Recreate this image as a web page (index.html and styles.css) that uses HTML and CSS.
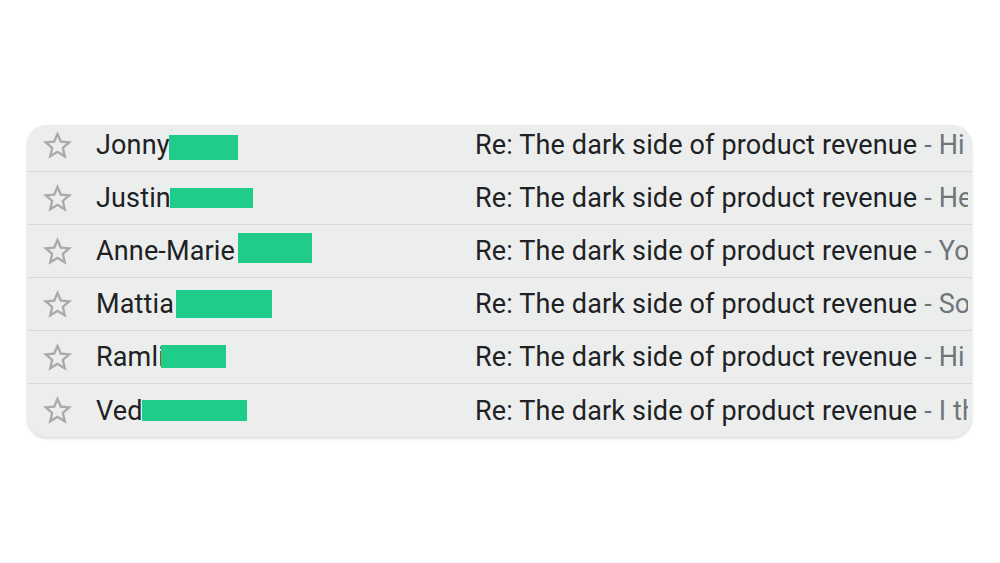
FILE: index.html
```html
<!DOCTYPE html>
<html lang="en">
<head>
<meta charset="utf-8">
<title>Inbox</title>
<link rel="stylesheet" href="styles.css">
</head>
<body>
<div class="stage">
  <div class="card">
    <div class="row first">
      <span class="star"><svg viewBox="0 0 24 24"><path d="M22 9.24l-7.19-.62L12 2 9.19 8.63 2 9.24l5.46 4.73L5.82 21 12 17.27 18.18 21l-1.63-7.03L22 9.24zM12 15.4l-3.76 2.27 1-4.28-3.32-2.88 4.38-.38L12 6.1l1.71 4.04 4.38.38-3.32 2.88 1 4.28L12 15.4z"/></svg></span>
      <span class="name">Jonny</span>
      <span class="subject">Re: The dark side of product revenue <span class="preview">- Hi there</span></span>
      <span class="redact r1"></span>
    </div>
    <div class="row">
      <span class="star"><svg viewBox="0 0 24 24"><path d="M22 9.24l-7.19-.62L12 2 9.19 8.63 2 9.24l5.46 4.73L5.82 21 12 17.27 18.18 21l-1.63-7.03L22 9.24zM12 15.4l-3.76 2.27 1-4.28-3.32-2.88 4.38-.38L12 6.1l1.71 4.04 4.38.38-3.32 2.88 1 4.28L12 15.4z"/></svg></span>
      <span class="name">Justin</span>
      <span class="subject">Re: The dark side of product revenue <span class="preview">- Hey</span></span>
      <span class="redact r2"></span>
    </div>
    <div class="row">
      <span class="star"><svg viewBox="0 0 24 24"><path d="M22 9.24l-7.19-.62L12 2 9.19 8.63 2 9.24l5.46 4.73L5.82 21 12 17.27 18.18 21l-1.63-7.03L22 9.24zM12 15.4l-3.76 2.27 1-4.28-3.32-2.88 4.38-.38L12 6.1l1.71 4.04 4.38.38-3.32 2.88 1 4.28L12 15.4z"/></svg></span>
      <span class="name">Anne-Marie</span>
      <span class="subject">Re: The dark side of product revenue <span class="preview">- You</span></span>
      <span class="redact r3"></span>
    </div>
    <div class="row">
      <span class="star"><svg viewBox="0 0 24 24"><path d="M22 9.24l-7.19-.62L12 2 9.19 8.63 2 9.24l5.46 4.73L5.82 21 12 17.27 18.18 21l-1.63-7.03L22 9.24zM12 15.4l-3.76 2.27 1-4.28-3.32-2.88 4.38-.38L12 6.1l1.71 4.04 4.38.38-3.32 2.88 1 4.28L12 15.4z"/></svg></span>
      <span class="name">Mattia</span>
      <span class="subject">Re: The dark side of product revenue <span class="preview">- So</span></span>
      <span class="redact r4"></span>
    </div>
    <div class="row">
      <span class="star"><svg viewBox="0 0 24 24"><path d="M22 9.24l-7.19-.62L12 2 9.19 8.63 2 9.24l5.46 4.73L5.82 21 12 17.27 18.18 21l-1.63-7.03L22 9.24zM12 15.4l-3.76 2.27 1-4.28-3.32-2.88 4.38-.38L12 6.1l1.71 4.04 4.38.38-3.32 2.88 1 4.28L12 15.4z"/></svg></span>
      <span class="name">Ramli</span>
      <span class="subject">Re: The dark side of product revenue <span class="preview">- Hi</span></span>
      <span class="redact r5"></span>
    </div>
    <div class="row last">
      <span class="star"><svg viewBox="0 0 24 24"><path d="M22 9.24l-7.19-.62L12 2 9.19 8.63 2 9.24l5.46 4.73L5.82 21 12 17.27 18.18 21l-1.63-7.03L22 9.24zM12 15.4l-3.76 2.27 1-4.28-3.32-2.88 4.38-.38L12 6.1l1.71 4.04 4.38.38-3.32 2.88 1 4.28L12 15.4z"/></svg></span>
      <span class="name">Ved</span>
      <span class="subject">Re: The dark side of product revenue <span class="preview">- I think</span></span>
      <span class="redact r6"></span>
    </div>
  </div>
</div>
</body>
</html>
```

FILE: styles.css
```css
html, body {
  margin: 0;
  padding: 0;
  background: #ffffff;
}

body {
  width: 1000px;
  height: 563px;
  overflow: hidden;
  font-family: Roboto, "Liberation Sans", Arial, sans-serif;
}

.stage {
  padding: 125px 0 0 27px;
}

.card {
  width: 945px;
  background: #ebeeed;
  border-radius: 20px;
  overflow: hidden;
  box-shadow: 0 2px 3px rgba(0, 0, 0, 0.12), 0 0 1px rgba(0, 0, 0, 0.08);
}

.row {
  position: relative;
  display: grid;
  grid-template-columns: 69px 379px 1fr;
  align-items: center;
  height: 53px;
  box-sizing: border-box;
  border-bottom: 1px solid #d8dbda;
  font-size: 27px;
  letter-spacing: 0.15px;
  color: #202124;
  white-space: nowrap;
}

.row.first {
  height: 47px;
  padding-bottom: 6px;
}

.row.last {
  border-bottom: none;
}

.star {
  display: flex;
  padding-left: 13px;
}

.star svg {
  width: 35px;
  height: 35px;
  fill: #a9abaa;
}

.name,
.subject {
  overflow: hidden;
}

.subject {
  margin-right: 4px;
}

.preview {
  color: #70757a;
}

.redact {
  position: absolute;
  background: #1fcc89;
}

.r1 { left: 142px; top: 10px; width: 69px; height: 25px; }
.r2 { left: 143px; top: 16px; width: 83px; height: 20px; }
.r3 { left: 211px; top: 8px; width: 74px; height: 30px; }
.r4 { left: 149px; top: 12px; width: 96px; height: 28px; }
.r5 { left: 134px; top: 14px; width: 65px; height: 23px; }
.r6 { left: 115px; top: 16px; width: 105px; height: 21px; }
```
